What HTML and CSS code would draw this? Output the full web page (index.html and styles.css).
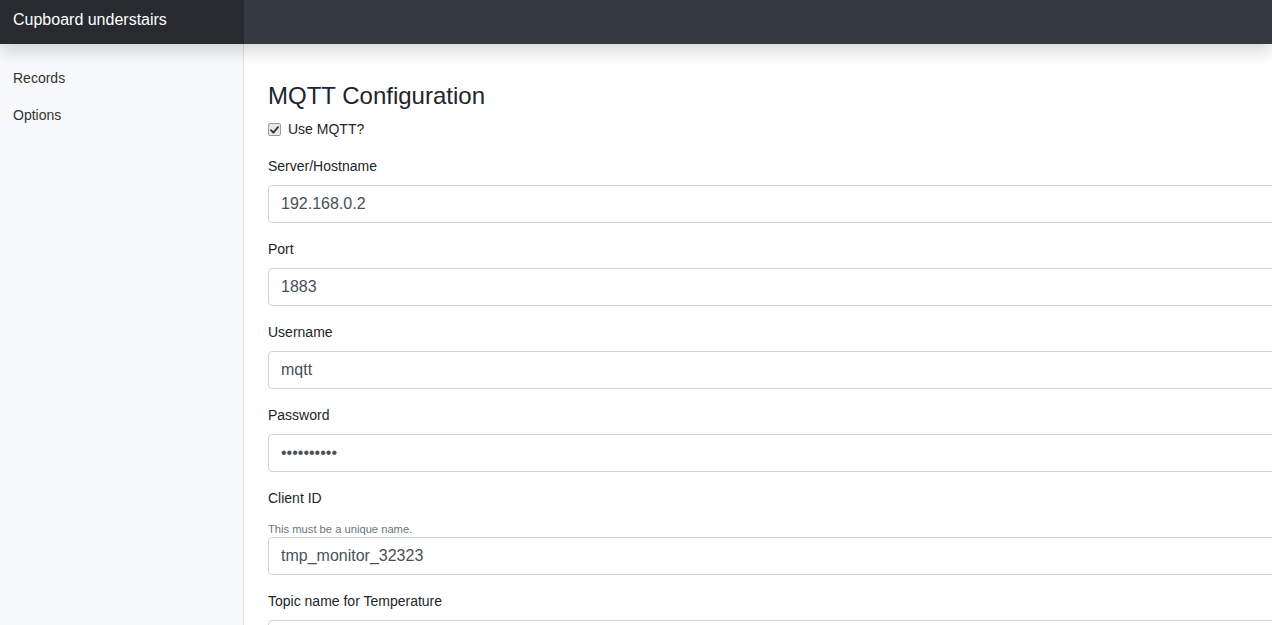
FILE: index.html
```html
<!DOCTYPE html>
<html lang="en">
<head>
<meta charset="utf-8">
<title>Cupboard understairs</title>
<link rel="stylesheet" href="styles.css">
</head>
<body>
<header class="navbar">
  <a class="brand" href="#">Cupboard understairs</a>
</header>
<div class="layout">
  <nav class="sidebar">
    <a class="nav-link" href="#">Records</a>
    <a class="nav-link" href="#">Options</a>
  </nav>
  <main class="main">
    <form class="content">
      <h4 class="title">MQTT Configuration</h4>
      <div class="form-group check-group">
        <span class="check-box"><svg width="9" height="8" viewBox="0 0 9 8"><path d="M1 4.2 L3.4 6.6 L8 1.2" fill="none" stroke="#333" stroke-width="1.8" stroke-linecap="round" stroke-linejoin="round"/></svg></span>
        <label class="check-label">Use MQTT?</label>
      </div>
      <div class="form-group">
        <label class="label">Server/Hostname</label>
        <input class="input" type="text" value="192.168.0.2">
      </div>
      <div class="form-group">
        <label class="label">Port</label>
        <input class="input" type="text" value="1883">
      </div>
      <div class="form-group">
        <label class="label">Username</label>
        <input class="input" type="text" value="mqtt">
      </div>
      <div class="form-group">
        <label class="label">Password</label>
        <input class="input" type="password" value="abcdefghij">
      </div>
      <div class="form-group">
        <label class="label">Client ID</label>
        <small class="form-text">This must be a unique name.</small>
        <input class="input" type="text" value="tmp_monitor_32323">
      </div>
      <div class="form-group">
        <label class="label">Topic name for Temperature</label>
        <input class="input" type="text" value="">
      </div>
    </form>
  </main>
</div>
</body>
</html>
```

FILE: styles.css
```css
* { box-sizing: border-box; }
html, body {
  margin: 0;
  height: 100%;
  overflow: hidden;
}
body {
  font-family: "Liberation Sans", Arial, sans-serif;
  font-size: 14px;
  line-height: 1.5;
  color: #212529;
  background: #fff;
  display: flex;
  flex-direction: column;
}
.navbar {
  position: relative;
  z-index: 10;
  height: 44px;
  flex: none;
  background: #343a40;
  display: flex;
  box-shadow: 0 8px 16px rgba(0, 0, 0, 0.15);
}
.brand {
  width: 244px;
  background: rgba(0, 0, 0, 0.25);
  color: #fff;
  text-decoration: none;
  font-size: 16px;
  line-height: 24px;
  padding: 8px 13px 12px;
}
.layout {
  flex: 1;
  display: flex;
  min-height: 0;
}
.sidebar {
  width: 244px;
  flex: none;
  background: #f8f9fa;
  border-right: 1px solid #dee2e6;
  padding-top: 16px;
  display: flex;
  flex-direction: column;
}
.nav-link {
  display: block;
  padding: 8px 13px;
  color: #333;
  text-decoration: none;
  font-size: 14px;
  line-height: 21px;
}
.main {
  flex: none;
  padding: 38px 0 0 24px;
}
.content {
  width: 1040px;
}
.title {
  margin: 0 0 8px;
  font-size: 24px;
  font-weight: 500;
  line-height: 1.2;
  color: #212529;
}
.form-group {
  margin-bottom: 16px;
  display: flex;
  flex-direction: column;
}
.check-group {
  flex-direction: row;
  align-items: center;
}
.check-box {
  width: 13px;
  height: 13px;
  margin: 1px 7px 0 0;
  border: 1px solid #9a9a9a;
  border-radius: 2px;
  background: #e8e8e8;
  display: flex;
  align-items: center;
  justify-content: center;
}
.check-label {
  line-height: 21px;
}
.label {
  display: block;
  margin-bottom: 8px;
  line-height: 21px;
}
.form-text {
  display: block;
  margin-top: 5px;
  margin-bottom: 0;
  font-size: 11.2px;
  line-height: 15px;
  color: #6c757d;
}
.input {
  display: block;
  width: 100%;
  height: 38px;
  padding: 6px 12px;
  font-family: "Liberation Sans", Arial, sans-serif;
  font-size: 16px;
  line-height: 24px;
  color: #495057;
  background: #fff;
  border: 1px solid #ced4da;
  border-radius: 4px;
  outline: none;
}
```
